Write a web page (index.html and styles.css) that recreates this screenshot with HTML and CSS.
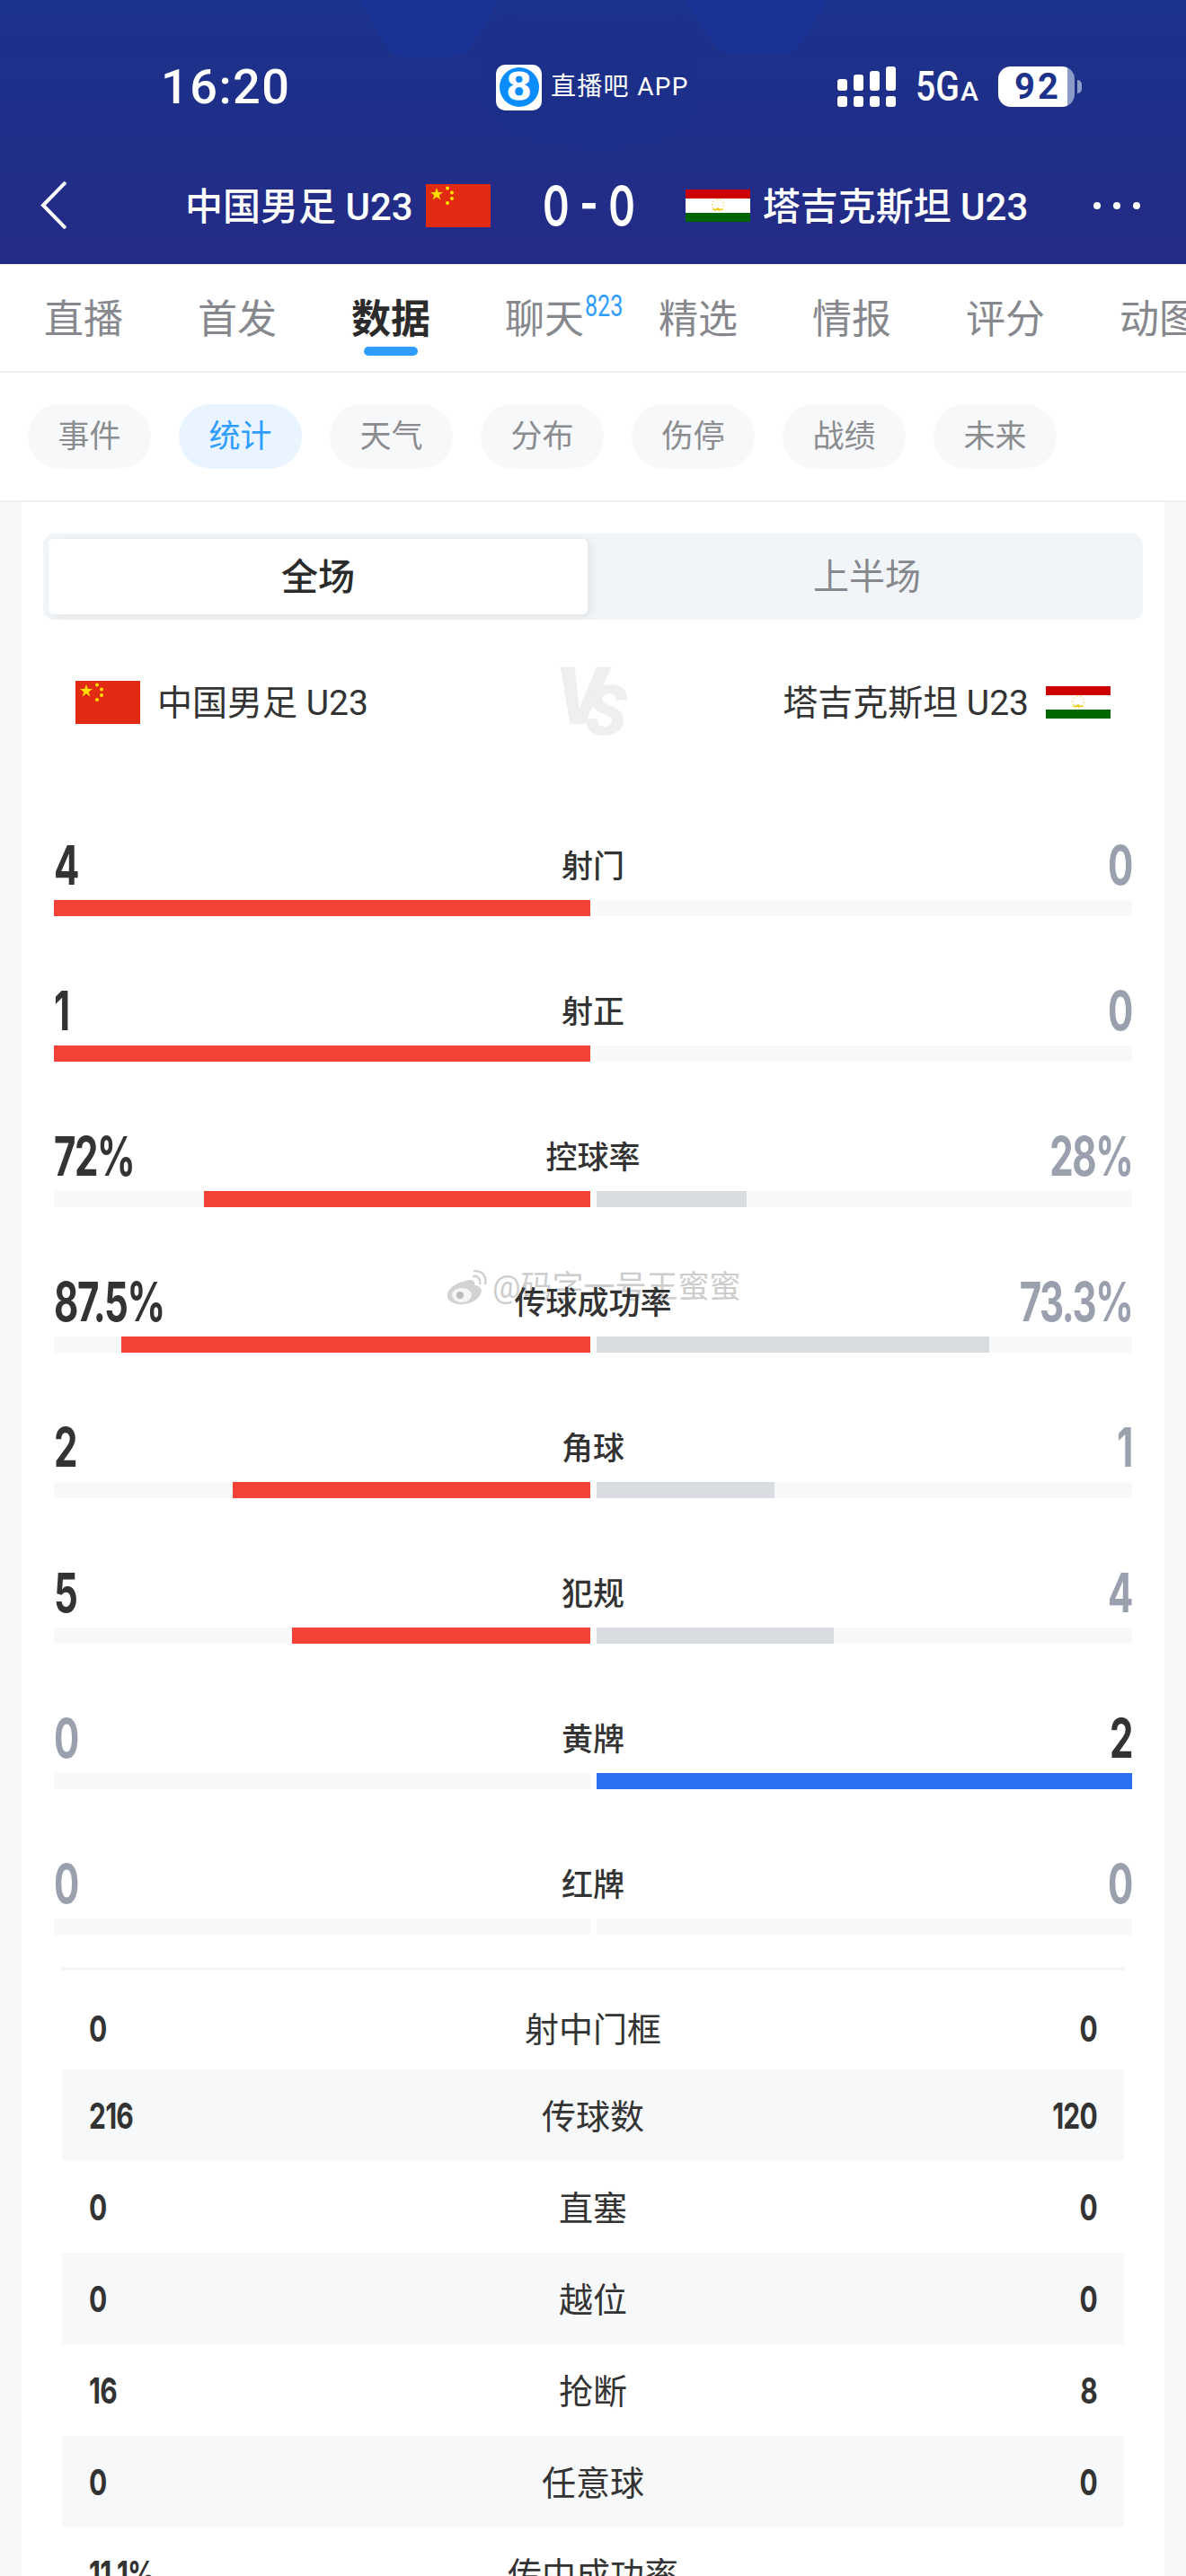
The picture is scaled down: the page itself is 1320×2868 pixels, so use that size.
FILE: index.html
```html
<!DOCTYPE html>
<html lang="zh-CN">
<head>
    <meta charset="UTF-8">
    <meta name="viewport" content="width=device-width, initial-scale=1.0">
    <title>中国男足U23 vs 塔吉克斯坦U23</title>
    <link rel="stylesheet" href="styles.css">
</head>
<body>
    <div class="page">
        <header class="header">
            <svg class="header-bg" viewBox="0 0 1320 294" aria-hidden="true">
                <path d="M400 0h155l-30 50q-8 13-24 13h-50q-16 0-22-13z" fill="#17359a" opacity=".7"/>
                <path d="M762 0h159l-30 48q-8 12-24 12h-50q-16 0-22-12z" fill="#17359a" opacity=".7"/>
                <path d="M570 20h185q20 0 20 20v70q0 58-112 58t-123-58v-70q0-20 30-20z" fill="#1a2f88" opacity=".5"/>
            </svg>
            <div class="status-row">
                <div class="time">16:20</div>
                <div class="app-tag">
                    <div class="app-logo"><span class="app-logo-circle">8</span></div>
                    <span class="app-name">直播吧 APP</span>
                </div>
                <div class="status-right">
                    <svg class="signal" width="66" height="46" viewBox="0 0 66 46" fill="#fff">
                        <rect x="1" y="14" width="11" height="13" rx="3"/>
                        <rect x="19" y="9" width="11" height="18" rx="3"/>
                        <rect x="37" y="5" width="11" height="22" rx="3"/>
                        <rect x="55" y="0" width="11" height="27" rx="3"/>
                        <rect x="1" y="33" width="11" height="12" rx="3"/>
                        <rect x="19" y="33" width="11" height="12" rx="3"/>
                        <rect x="37" y="33" width="11" height="12" rx="3"/>
                        <rect x="55" y="33" width="11" height="12" rx="3"/>
                    </svg>
                    <div class="net"><span class="net-big">5G</span><span class="net-small">A</span></div>
                    <div class="battery"><div class="battery-body"><span class="battery-level">92</span></div><div class="battery-cap"></div></div>
                </div>
            </div>
            <div class="match-row">
                <svg class="back" width="29" height="53" viewBox="0 0 29 53" fill="none" stroke="#fff" stroke-width="4"><path d="M28 1L3 26.5 28 52"/></svg>
                <div class="team-home">
                    <span>中国男足 U23</span>
                    <svg class="flag-cn" width="72" height="48" viewBox="0 0 72 48">
                        <rect width="72" height="48" fill="#e02a12"/>
                        <polygon fill="#fedf00" points="12,4 13.8,9 19,9 14.8,12.2 16.3,17.5 12,14.3 7.7,17.5 9.2,12.2 5,9 10.2,9"/>
                        <circle cx="24" cy="4.5" r="2" fill="#fedf00"/>
                        <circle cx="29" cy="9.5" r="2" fill="#fedf00"/>
                        <circle cx="29" cy="16" r="2" fill="#fedf00"/>
                        <circle cx="24" cy="21" r="2" fill="#fedf00"/>
                    </svg>
                </div>
                <div class="score">0 - 0</div>
                <div class="team-away">
                    <svg class="flag-tj" width="72" height="36" viewBox="0 0 72 36">
                        <rect width="72" height="36" fill="#fff"/>
                        <rect width="72" height="10" fill="#cc0000"/>
                        <rect y="26" width="72" height="10" fill="#006600"/>
                        <path d="M30 23h12l-1.500-2-2 1-2.500-2-2.500 2-2-1z" fill="#f8c300"/>
                        <circle cx="36" cy="17.500" r="6.500" fill="none" stroke="#f8c300" stroke-width="1" stroke-dasharray="1.500 2.500"/>
                    </svg>
                    <span>塔吉克斯坦 U23</span>
                </div>
                <div class="more"><i></i><i></i><i></i></div>
            </div>
        </header>

        <nav class="tabs">
            <div class="tab">直播</div>
            <div class="tab">首发</div>
            <div class="tab tab-active">数据</div>
            <div class="tab">聊天<sup class="tab-badge">823</sup></div>
            <div class="tab">精选</div>
            <div class="tab">情报</div>
            <div class="tab">评分</div>
            <div class="tab">动图</div>
        </nav>

        <div class="filters">
            <div class="chip">事件</div>
            <div class="chip chip-active">统计</div>
            <div class="chip">天气</div>
            <div class="chip">分布</div>
            <div class="chip">伤停</div>
            <div class="chip">战绩</div>
            <div class="chip">未来</div>
        </div>

        <main class="card">
            <div class="segment">
                <div class="segment-item segment-active">全场</div>
                <div class="segment-item">上半场</div>
            </div>

            <div class="teams">
                <div class="team-left">
                    <svg class="flag-cn" width="72" height="48" viewBox="0 0 72 48">
                        <rect width="72" height="48" fill="#e02a12"/>
                        <polygon fill="#fedf00" points="12,4 13.8,9 19,9 14.8,12.2 16.3,17.5 12,14.3 7.7,17.5 9.2,12.2 5,9 10.2,9"/>
                        <circle cx="24" cy="4.5" r="2" fill="#fedf00"/>
                        <circle cx="29" cy="9.5" r="2" fill="#fedf00"/>
                        <circle cx="29" cy="16" r="2" fill="#fedf00"/>
                        <circle cx="24" cy="21" r="2" fill="#fedf00"/>
                    </svg>
                    <span>中国男足 U23</span>
                </div>
                <div class="vs"><span class="vs-v">V</span><span class="vs-s">S</span></div>
                <div class="team-right">
                    <span>塔吉克斯坦 U23</span>
                    <svg class="flag-tj" width="72" height="36" viewBox="0 0 72 36">
                        <rect width="72" height="36" fill="#fff"/>
                        <rect width="72" height="10" fill="#cc0000"/>
                        <rect y="26" width="72" height="10" fill="#006600"/>
                        <path d="M30 23h12l-1.500-2-2 1-2.500-2-2.500 2-2-1z" fill="#f8c300"/>
                        <circle cx="36" cy="17.500" r="6.500" fill="none" stroke="#f8c300" stroke-width="1" stroke-dasharray="1.500 2.500"/>
                    </svg>
                </div>
            </div>

            <div class="stats">
                <div class="stat">
                    <div class="stat-head"><span class="num num-left">4</span><span class="stat-label">射门</span><span class="num num-right num-dim">0</span></div>
                    <div class="bars"><div class="track track-left"><div class="fill fill-red" style="width:100%"></div></div><div class="track"></div></div>
                </div>
                <div class="stat">
                    <div class="stat-head"><span class="num num-left">1</span><span class="stat-label">射正</span><span class="num num-right num-dim">0</span></div>
                    <div class="bars"><div class="track track-left"><div class="fill fill-red" style="width:100%"></div></div><div class="track"></div></div>
                </div>
                <div class="stat">
                    <div class="stat-head"><span class="num num-left">72%</span><span class="stat-label">控球率</span><span class="num num-right num-dim">28%</span></div>
                    <div class="bars"><div class="track track-left"><div class="fill fill-red" style="width:72%"></div></div><div class="track"><div class="fill fill-gray" style="width:28%"></div></div></div>
                </div>
                <div class="stat">
                    <div class="stat-head"><span class="num num-left">87.5%</span><span class="stat-label">传球成功率</span><span class="num num-right num-dim">73.3%</span></div>
                    <div class="bars"><div class="track track-left"><div class="fill fill-red" style="width:87.5%"></div></div><div class="track"><div class="fill fill-gray" style="width:73.3%"></div></div></div>
                    <div class="watermark">
                        <svg width="46" height="40" viewBox="0 0 46 40" fill="none">
                            <path d="M20 12c8-3 13-2 13 4 6 1 9 5 7 10-3 8-13 13-22 13C8 39 1 35 1 28c0-6 8-14 19-16z" fill="#d2d2d2" stroke="#fff" stroke-width="1.500"/>
                            <ellipse cx="18" cy="28" rx="11" ry="8" fill="#f4f4f4"/>
                            <circle cx="16" cy="28" r="4" fill="#bdbdbd"/>
                            <path d="M30 7c6-1 9 3 8 9M31 1c10-1 15 6 13 15" stroke="#d2d2d2" stroke-width="2.500"/>
                        </svg>
                        <span>@码字一号王蜜蜜</span>
                    </div>
                </div>
                <div class="stat">
                    <div class="stat-head"><span class="num num-left">2</span><span class="stat-label">角球</span><span class="num num-right num-dim">1</span></div>
                    <div class="bars"><div class="track track-left"><div class="fill fill-red" style="width:66.7%"></div></div><div class="track"><div class="fill fill-gray" style="width:33.3%"></div></div></div>
                </div>
                <div class="stat">
                    <div class="stat-head"><span class="num num-left">5</span><span class="stat-label">犯规</span><span class="num num-right num-dim">4</span></div>
                    <div class="bars"><div class="track track-left"><div class="fill fill-red" style="width:55.6%"></div></div><div class="track"><div class="fill fill-gray" style="width:44.4%"></div></div></div>
                </div>
                <div class="stat">
                    <div class="stat-head"><span class="num num-left num-dim">0</span><span class="stat-label">黄牌</span><span class="num num-right">2</span></div>
                    <div class="bars"><div class="track track-left"></div><div class="track"><div class="fill fill-blue" style="width:100%"></div></div></div>
                </div>
                <div class="stat">
                    <div class="stat-head"><span class="num num-left num-dim">0</span><span class="stat-label">红牌</span><span class="num num-right num-dim">0</span></div>
                    <div class="bars"><div class="track track-left"></div><div class="track"></div></div>
                </div>
            </div>

            <div class="table">
                <div class="row row-first"><span class="cell cell-left">0</span><span class="cell-label">射中门框</span><span class="cell cell-right">0</span></div>
                <div class="row row-band"><span class="cell cell-left">216</span><span class="cell-label">传球数</span><span class="cell cell-right">120</span></div>
                <div class="row"><span class="cell cell-left">0</span><span class="cell-label">直塞</span><span class="cell cell-right">0</span></div>
                <div class="row row-band"><span class="cell cell-left">0</span><span class="cell-label">越位</span><span class="cell cell-right">0</span></div>
                <div class="row"><span class="cell cell-left">16</span><span class="cell-label">抢断</span><span class="cell cell-right">8</span></div>
                <div class="row row-band"><span class="cell cell-left">0</span><span class="cell-label">任意球</span><span class="cell cell-right">0</span></div>
                <div class="row"><span class="cell cell-left">11.1%</span><span class="cell-label">传中成功率</span><span class="cell cell-right"></span></div>
            </div>
        </main>
    </div>
</body>
</html>
```

FILE: styles.css
```css
* {
    box-sizing: border-box;
}
body {
    margin: 0;
    background-color: #f7f8fa;
    font-family: Roboto, "Noto Sans CJK SC", sans-serif;
    color: #333;
}
.page {
    width: 1320px;
    height: 2868px;
    overflow: hidden;
}

/* header */
.header {
    position: relative;
    height: 294px;
    padding-top: 68px;
    background: linear-gradient(180deg, #1b328c 0%, #242b85 100%);
    color: #fff;
    overflow: hidden;
}
.header-bg {
    position: absolute;
    top: 0;
    left: 0;
    width: 1320px;
    height: 294px;
}
.status-row {
    position: relative;
    display: grid;
    grid-template-columns: 371px 379px auto;
    height: 51px;
    padding-left: 181px;
}
.time {
    font-size: 54px;
    font-weight: 500;
    line-height: 58px;
    letter-spacing: 1.5px;
    margin-left: -2px;
}
.app-tag {
    display: flex;
    align-items: center;
    gap: 10px;
}
.app-logo {
    display: flex;
    justify-content: center;
    align-items: center;
    width: 51px;
    height: 51px;
    background-color: #fff;
    border-radius: 10px;
}
.app-logo-circle {
    width: 44px;
    height: 44px;
    border-radius: 50%;
    background-color: #0a8cff;
    font-family: "DejaVu Sans", sans-serif;
    font-weight: bold;
    font-size: 42px;
    line-height: 44px;
    text-align: center;
}
.app-name {
    font-size: 28px;
    letter-spacing: 1.3px;
    white-space: nowrap;
    margin-top: -6px;
}
.status-right {
    display: flex;
    align-items: flex-start;
    margin-top: 6px;
}
.signal {
    flex: none;
}
.net {
    display: flex;
    align-items: baseline;
    width: 114px;
    padding-left: 22px;
    margin-top: 2px;
    font-weight: 500;
    line-height: 40px;
}
.net-big {
    display: inline-block;
    font-size: 46px;
    transform: scaleX(.85);
    transform-origin: left;
    width: 50px;
}
.net-small {
    font-size: 30px;
}
.battery {
    display: flex;
    align-items: center;
}
.battery-body {
    width: 85px;
    height: 45px;
    border-radius: 14px;
    background: linear-gradient(90deg, #fff 0, #fff 77px, #8c9ac8 77px);
    color: #1d328b;
    font-size: 40px;
    font-weight: bold;
    line-height: 45px;
    padding-left: 18px;
    letter-spacing: 3px;
}
.battery-cap {
    width: 5px;
    height: 15px;
    margin-left: 3px;
    border-radius: 0 6px 6px 0;
    background-color: #8c9ac8;
}
.match-row {
    position: relative;
    display: flex;
    align-items: center;
    height: 53px;
    margin-top: 83px;
    padding-left: 45px;
    font-size: 42px;
    font-weight: 500;
    white-space: nowrap;
}
.back {
    flex: none;
}
.team-home {
    display: flex;
    align-items: center;
    gap: 14px;
    margin-left: 132px;
}
.team-home span,
.team-away span {
    margin-top: -5px;
}
.team-away {
    display: flex;
    align-items: center;
    gap: 14px;
    margin-left: 60px;
}
.score {
    width: 132px;
    margin-left: 58px;
    margin-right: -33px;
    font-family: Inter, sans-serif;
    font-size: 60px;
    font-weight: 600;
    line-height: 53px;
    transform: scaleX(.75);
    transform-origin: left;
    margin-top: 2px;
}
.more {
    display: flex;
    gap: 14px;
    margin-left: 73px;
}
.more i {
    width: 8px;
    height: 8px;
    border-radius: 50%;
    background-color: #fff;
}

/* tabs */
.tabs {
    display: flex;
    gap: 83px;
    height: 121px;
    padding-left: 49px;
    background-color: #fff;
    border-bottom: 2px solid #eeeff1;
    overflow: hidden;
}
.tab {
    position: relative;
    flex: none;
    font-size: 44px;
    line-height: 124px;
    height: 119px;
    color: #86888d;
}
.tab-active {
    color: #2b2b2b;
    font-weight: bold;
}
.tab-active::after {
    content: "";
    position: absolute;
    left: 14px;
    bottom: 17px;
    width: 60px;
    height: 10px;
    border-radius: 5px;
    background-color: #2e9dff;
}
.tab-badge {
    position: absolute;
    top: 34px;
    left: 89px;
    font-size: 33px;
    line-height: 26px;
    color: #2e9dff;
    transform: scaleX(.76);
    transform-origin: left;
}

/* filter chips */
.filters {
    display: flex;
    gap: 31px;
    height: 144px;
    padding: 35px 0 35px 31px;
    background-color: #fff;
    border-bottom: 2px solid #eeeff1;
}
.chip {
    width: 137px;
    height: 72px;
    border-radius: 36px;
    background-color: #f7f8fa;
    color: #8a8c90;
    font-size: 35px;
    line-height: 74px;
    text-align: center;
}
.chip-active {
    background-color: #e8f4ff;
    color: #2e9dff;
}

/* main card */
.card {
    margin: 0 24px;
    height: 2320px;
    padding-top: 35px;
    background-color: #fff;
}
.segment {
    display: flex;
    height: 96px;
    margin: 0 24px;
    padding: 6px;
    border-radius: 12px;
    background-color: #f2f5f8;
}
.segment-item {
    flex: 1;
    font-size: 40px;
    line-height: 86px;
    text-align: center;
    color: #86888d;
    padding-left: 10px;
}
.segment-active {
    flex: none;
    width: 600px;
    padding-left: 0;
    border-radius: 6px;
    background-color: #fff;
    box-shadow: 4px 2px 10px rgba(0, 0, 0, .07);
    color: #2b2b2b;
    font-size: 41px;
    font-weight: 500;
}
.teams {
    display: flex;
    align-items: center;
    height: 72px;
    margin-top: 56px;
    padding: 0 60px;
    font-size: 39px;
    white-space: nowrap;
}
.team-left,
.team-right {
    display: flex;
    flex: 1;
    align-items: center;
}
.team-left span,
.team-right span {
    margin-top: -6px;
}
.team-left {
    gap: 19px;
}
.team-right {
    gap: 19px;
    justify-content: flex-end;
}
.vs {
    display: flex;
    width: 82px;
    height: 72px;
    margin-left: -2px;
    color: #efefef;
    font-weight: 900;
    font-style: italic;
}
.vs-v {
    font-size: 88px;
    line-height: 60px;
}
.vs-s {
    margin-left: -24px;
    margin-top: 20px;
    font-size: 78px;
    line-height: 52px;
}

/* big stat rows */
.stats {
    display: flex;
    flex-direction: column;
    gap: 78px;
    margin-top: 118px;
    padding: 0 36px;
}
.stat {
    position: relative;
}
.stat-head {
    display: grid;
    grid-template-columns: 1fr auto 1fr;
    align-items: center;
    height: 52px;
    margin-bottom: 14px;
}
.num {
    display: block;
    font-family: Inter, sans-serif;
    font-size: 60px;
    font-weight: 700;
    line-height: 54px;
    letter-spacing: -2px;
    transform: scaleX(.7);
}
.num-left {
    transform-origin: left;
}
.num-right {
    text-align: right;
    transform-origin: right;
}
.num-dim {
    color: #9ba0af;
}
.stat-label {
    position: relative;
    z-index: 1;
    margin-top: -3px;
    font-size: 35px;
    font-weight: 500;
}
.bars {
    display: grid;
    grid-template-columns: 1fr 1fr;
    gap: 7px;
}
.track {
    display: flex;
    height: 18px;
    background-color: #f7f8fa;
}
.track-left {
    justify-content: flex-end;
}
.fill-red {
    background-color: #f44236;
}
.fill-gray {
    background-color: #d9dce1;
}
.fill-blue {
    background-color: #2b70f0;
}
.watermark {
    position: absolute;
    top: -8px;
    left: 436px;
    display: flex;
    align-items: center;
    gap: 6px;
    font-size: 35px;
    line-height: 40px;
    color: #cdcdcd;
    text-shadow: 0 0 2px #fff, 0 0 2px #fff;
    white-space: nowrap;
}

/* small stat table */
.table {
    margin: 37px 45px 0;
    border-top: 2px solid #f0f0f2;
}
.row {
    display: grid;
    grid-template-columns: 1fr auto 1fr;
    align-items: center;
    height: 102px;
    padding: 0 30px;
}
.row-first {
    height: 92px;
    margin-top: 19px;
}
.row-band {
    background-color: #f7f8fa;
}
.cell {
    display: block;
    font-family: Inter, sans-serif;
    font-size: 40px;
    font-weight: 700;
    letter-spacing: -1px;
    transform: scaleX(.75);
}
.cell-left {
    transform-origin: left;
}
.cell-right {
    text-align: right;
    transform-origin: right;
}
.cell-label {
    margin-top: -4px;
    font-size: 38px;
}
```
